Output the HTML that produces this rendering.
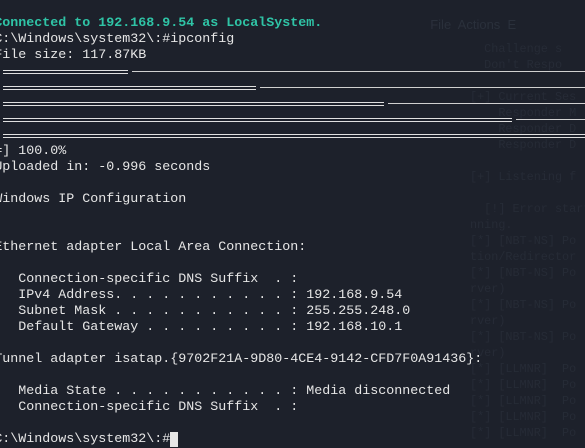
<!DOCTYPE html>
<html><head><style>
body{margin:0;width:585px;height:441px;overflow:hidden;background:#1d212b;position:relative;font-family:"Liberation Mono",monospace;}
.t2{position:absolute;left:-5.7px;white-space:pre;font-size:13.33px;line-height:16px;color:#e6e6e6;}
.g{color:#2fc4a6;font-weight:bold}
.bg{position:absolute;white-space:pre;font-size:11.8px;line-height:16px;color:#262b36;}
.d{position:absolute;border-top:1px solid #e0e0e0;border-bottom:1px solid #e0e0e0;height:2px;left:3px}
.s{position:absolute;height:1px;background:#d0d0d0;right:0}
</style></head><body>
<div class="bg" style="left:423px;top:17px;font-family:'Liberation Sans',sans-serif;font-size:13px;color:#2a303b">  File  Actions  E</div>
<div class="bg" style="left:470px;top:41px">  Challenge s
  Don't Respo

[+] Current Ses
    Responder M
    Responder D
    Responder D

[+] Listening f

  [!] Error start
nning.
[*] [NBT-NS] Po
tion/Redirector
[*] [NBT-NS] Po
rver)
[*] [NBT-NS] Po
rver)
[*] [NBT-NS] Po
rver)
[*] [LLMNR]  Po
[*] [LLMNR]  Po
[*] [LLMNR]  Po
[*] [LLMNR]  Po
[*] [LLMNR]  Po</div>
<div class="t2" style="top:16px"><span class="g">Connected to 192.168.9.54 as LocalSystem.</span>
C:\Windows\system32\:#ipconfig
File size: 117.87KB





=] 100.0%
Uploaded in: -0.996 seconds

Windows IP Configuration


Ethernet adapter Local Area Connection:

   Connection-specific DNS Suffix  . :
   IPv4 Address. . . . . . . . . . . : 192.168.9.54
   Subnet Mask . . . . . . . . . . . : 255.255.248.0
   Default Gateway . . . . . . . . . : 192.168.10.1

Tunnel adapter isatap.{9702F21A-9D80-4CE4-9142-CFD7F0A91436}:

   Media State . . . . . . . . . . . : Media disconnected
   Connection-specific DNS Suffix  . :

C:\Windows\system32\:#<span style="background:#e6e6e6">&nbsp;</span></div>
<div class="d" style="top:70px;width:125px"></div><div class="s" style="top:71px;left:132px"></div>
<div class="d" style="top:86px;width:253px"></div><div class="s" style="top:87px;left:260px"></div>
<div class="d" style="top:102px;width:381px"></div><div class="s" style="top:103px;left:388px"></div>
<div class="d" style="top:118px;width:509px"></div><div class="s" style="top:119px;left:516px"></div>
<div class="d" style="top:134px;width:582px"></div>
</body></html>
